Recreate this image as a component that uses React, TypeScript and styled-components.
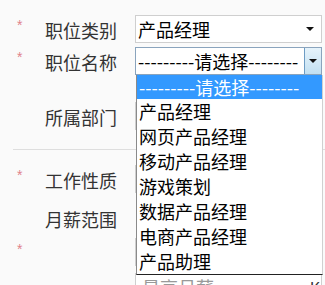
import React from "react";
import styled, { createGlobalStyle } from "styled-components";

const GlobalStyle = createGlobalStyle`
  html, body {
    margin: 0;
    padding: 0;
    background: #fafafa;
    overflow: hidden;
  }
  body {
    font-family: "Noto Sans CJK SC", "Noto Sans", sans-serif;
  }
`;

const Form = styled.div`
  position: relative;
  width: 325px;
  height: 285px;
  padding-top: 14px;
  box-sizing: border-box;
  overflow: hidden;
`;

const Row = styled.div<{ $top?: number }>`
  display: grid;
  grid-template-columns: 45px 90px 187px;
  align-items: center;
  height: 28px;
  margin-top: ${(p) => p.$top ?? 0}px;
`;

const Star = styled.span`
  align-self: start;
  padding-left: 17px;
  margin-top: 4px;
  color: #e0828a;
  font-size: 14px;
  line-height: 14px;
  font-family: "Liberation Sans", sans-serif;
`;

const Label = styled.span`
  font-size: 18px;
  color: #333;
  line-height: 28px;
  margin-top: 2px;
  white-space: nowrap;
`;

const Select = styled.div<{ $focused?: boolean }>`
  position: relative;
  height: 28px;
  box-sizing: border-box;
  border: 1px solid ${(p) => (p.$focused ? "#8aa4bd" : "#cfcfcf")};
  background: #fff;
  display: flex;
  align-items: center;
  padding-left: 2px;
  font-size: 18px;
  color: #000;
  white-space: nowrap;
`;

const SelectText = styled.span`
  flex: 1;
  overflow: hidden;
`;

const Caret = styled.span`
  width: 0;
  height: 0;
  border-left: 4px solid transparent;
  border-right: 4px solid transparent;
  border-top: 4px solid #111;
`;

const ArrowBox = styled.span<{ $focused?: boolean }>`
  display: flex;
  align-items: center;
  justify-content: center;
  width: 17px;
  height: 100%;
  box-sizing: border-box;
  background: ${(p) =>
    p.$focused ? "linear-gradient(#e6f3fb, #c2e0f2)" : "transparent"};
  border-left: 1px solid ${(p) => (p.$focused ? "#6d9cc4" : "transparent")};
  margin-right: ${(p) => (p.$focused ? 0 : 3)}px;
`;

const Input = styled.div`
  height: 28px;
  box-sizing: border-box;
  border: 1px solid #cfcfcf;
  background: #fff;
  display: flex;
  align-items: center;
  justify-content: space-between;
  padding: 0 1px 0 6px;
  font-size: 18px;
`;

const Placeholder = styled.span`
  color: #999;
`;

const Unit = styled.span`
  color: #333;
  font-size: 16px;
`;

const Divider = styled.div`
  height: 1px;
  background: #dedede;
  margin: 20px 0 0 13px;
`;

const Dropdown = styled.ul`
  position: absolute;
  top: calc(100% + 1px);
  left: 0;
  width: 187px;
  margin: 0;
  padding: 0;
  list-style: none;
  background: #fff;
  border-left: 1px solid #8a8a8a;
  border-bottom: 1px solid #222;
  border-right: 1px solid #d0d0d0;
  box-sizing: border-box;
  z-index: 10;
`;

const Option = styled.li<{ $active?: boolean }>`
  height: ${(p) => (p.$active ? 24 : 25)}px;
  line-height: ${(p) => (p.$active ? 24 : 25)}px;
  padding-left: 2px;
  font-size: 18px;
  color: ${(p) => (p.$active ? "#fff" : "#000")};
  background: ${(p) => (p.$active ? "#3399ff" : "transparent")};
  white-space: nowrap;
`;

const placeholder = "---------请选择--------";
const options = [
  "产品经理",
  "网页产品经理",
  "移动产品经理",
  "游戏策划",
  "数据产品经理",
  "电商产品经理",
  "产品助理",
];

export default function App() {
  return (
    <>
      <GlobalStyle />
      <Form>
        <Row>
          <Star>*</Star>
          <Label>职位类别</Label>
          <Select>
            <SelectText>产品经理</SelectText>
            <ArrowBox>
              <Caret />
            </ArrowBox>
          </Select>
        </Row>
        <Row $top={4}>
          <Star>*</Star>
          <Label>职位名称</Label>
          <Select $focused>
            <SelectText>{placeholder}</SelectText>
            <ArrowBox $focused>
              <Caret />
            </ArrowBox>
            <Dropdown>
              <Option $active>{placeholder}</Option>
              {options.map((o) => (
                <Option key={o}>{o}</Option>
              ))}
            </Dropdown>
          </Select>
        </Row>
        <Row $top={27}>
          <span />
          <Label>所属部门</Label>
          <Select />
        </Row>
        <Divider />
        <Row $top={14}>
          <Star>*</Star>
          <Label>工作性质</Label>
          <Select />
        </Row>
        <Row $top={11}>
          <span />
          <Label>月薪范围</Label>
          <span />
        </Row>
        <Row $top={7}>
          <Star>*</Star>
          <Label />
          <Input />
        </Row>
        <Row $top={7}>
          <span />
          <Label />
          <Input>
            <Placeholder>最高月薪</Placeholder>
            <Unit>K</Unit>
          </Input>
        </Row>
      </Form>
    </>
  );
}
